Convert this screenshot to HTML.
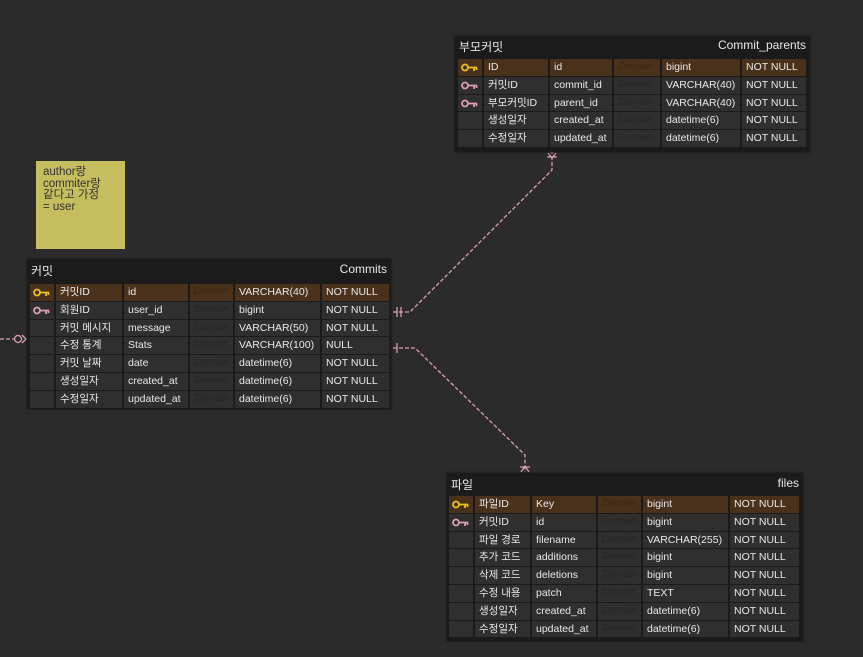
<!DOCTYPE html>
<html><head><meta charset="utf-8"><style>
body{margin:0;width:863px;height:657px;background:#2b2b2b;overflow:hidden;position:relative;font-family:"Liberation Sans","Noto Sans CJK KR",sans-serif;color:#e8e8e8}
.t{position:absolute;background:#1b1b1b;box-shadow:0 0 2px #111}
.h{position:absolute;left:4px;right:4px;top:2px;font-size:12px;display:flex;justify-content:space-between}
.rows{position:absolute;left:2px}
.r{display:grid;column-gap:2px;height:16.8px;margin-bottom:1px;font-size:10.5px;line-height:16px}
.r div{background:#2f2f2f;padding-left:4px;white-space:nowrap;overflow:hidden}
.r.pk div{background:#4a311c}
.r div.d{color:#262626;font-style:italic;font-size:10px}
.r.pk div.d{color:#3a2716}
.k{position:relative}
.k svg{position:absolute;left:3px;top:4px}
.note{position:absolute;left:36px;top:161px;width:89px;height:88px;background:#c5bd5e;color:#333;font-size:11.5px;line-height:11.5px;padding:6px 0 0 7px;box-sizing:border-box}
</style></head><body>
<svg width="863" height="657" style="position:absolute;left:0;top:0">
<g stroke="#d9a0b2" stroke-width="1.3" fill="none" stroke-dasharray="4,2">
<path d="M393 312 L410 312 L552 170 L552 152"/>
<path d="M393 348 L415 348 L525 455 L525 472"/>
<path d="M0 339 L14 339"/>
</g>
<g stroke="#d9a0b2" stroke-width="1.3" fill="none">
<path d="M397 307 V317 M401 307 V317"/>
<path d="M397 343 V353"/>
<path d="M547 157 H557 M548 153 L552 158 L556 153"/>
<path d="M520 467 H530 M521 472 L525 466 L529 472"/>
<circle cx="18" cy="339" r="3.5"/><path d="M22 335 L26 339 L22 343"/>
</g>
</svg>
<div class="note">author랑<br>commiter랑<br>같다고 가정<br>= user</div>

<div class="t" style="left:455px;top:36px;width:355px;height:116px">
<div class="h"><span>부모커밋</span><span>Commit_parents</span></div>
<div class="rows" style="top:23px;left:3px">
<div class="r pk" style="grid-template-columns:24px 64px 62px 46px 78px 64px"><div class="k"><svg width="18" height="9"><circle cx="4" cy="4.5" r="3" stroke="#e8c020" stroke-width="1.8" fill="none"/><path d="M7 4.5H16M13 4.5V8M15.5 4.5V7" stroke="#e8c020" stroke-width="1.8"/></svg></div><div>ID</div><div>id</div><div class="d">Domain</div><div>bigint</div><div>NOT NULL</div></div>
<div class="r" style="grid-template-columns:24px 64px 62px 46px 78px 64px"><div class="k"><svg width="18" height="9"><circle cx="4" cy="4.5" r="3" stroke="#d9a0b2" stroke-width="1.8" fill="none"/><path d="M7 4.5H16M13 4.5V8M15.5 4.5V7" stroke="#d9a0b2" stroke-width="1.8"/></svg></div><div>커밋ID</div><div>commit_id</div><div class="d">Domain</div><div>VARCHAR(40)</div><div>NOT NULL</div></div>
<div class="r" style="grid-template-columns:24px 64px 62px 46px 78px 64px"><div class="k"><svg width="18" height="9"><circle cx="4" cy="4.5" r="3" stroke="#d9a0b2" stroke-width="1.8" fill="none"/><path d="M7 4.5H16M13 4.5V8M15.5 4.5V7" stroke="#d9a0b2" stroke-width="1.8"/></svg></div><div>부모커밋ID</div><div>parent_id</div><div class="d">Domain</div><div>VARCHAR(40)</div><div>NOT NULL</div></div>
<div class="r" style="grid-template-columns:24px 64px 62px 46px 78px 64px"><div></div><div>생성일자</div><div>created_at</div><div class="d">Domain</div><div>datetime(6)</div><div>NOT NULL</div></div>
<div class="r" style="grid-template-columns:24px 64px 62px 46px 78px 64px"><div></div><div>수정일자</div><div>updated_at</div><div class="d">Domain</div><div>datetime(6)</div><div>NOT NULL</div></div>
</div></div>

<div class="t" style="left:27px;top:259px;width:364px;height:150px">
<div class="h" style="top:3px"><span>커밋</span><span>Commits</span></div>
<div class="rows" style="top:25px;left:3px">
<div class="r pk" style="grid-template-columns:24px 66px 64px 43px 85px 67px"><div class="k"><svg width="18" height="9"><circle cx="4" cy="4.5" r="3" stroke="#e8c020" stroke-width="1.8" fill="none"/><path d="M7 4.5H16M13 4.5V8M15.5 4.5V7" stroke="#e8c020" stroke-width="1.8"/></svg></div><div>커밋ID</div><div>id</div><div class="d">Domain</div><div>VARCHAR(40)</div><div>NOT NULL</div></div>
<div class="r" style="grid-template-columns:24px 66px 64px 43px 85px 67px"><div class="k"><svg width="18" height="9"><circle cx="4" cy="4.5" r="3" stroke="#d9a0b2" stroke-width="1.8" fill="none"/><path d="M7 4.5H16M13 4.5V8M15.5 4.5V7" stroke="#d9a0b2" stroke-width="1.8"/></svg></div><div>회원ID</div><div>user_id</div><div class="d">Domain</div><div>bigint</div><div>NOT NULL</div></div>
<div class="r" style="grid-template-columns:24px 66px 64px 43px 85px 67px"><div></div><div>커밋 메시지</div><div>message</div><div class="d">Domain</div><div>VARCHAR(50)</div><div>NOT NULL</div></div>
<div class="r" style="grid-template-columns:24px 66px 64px 43px 85px 67px"><div></div><div>수정 통계</div><div>Stats</div><div class="d">Domain</div><div>VARCHAR(100)</div><div>NULL</div></div>
<div class="r" style="grid-template-columns:24px 66px 64px 43px 85px 67px"><div></div><div>커밋 날짜</div><div>date</div><div class="d">Domain</div><div>datetime(6)</div><div>NOT NULL</div></div>
<div class="r" style="grid-template-columns:24px 66px 64px 43px 85px 67px"><div></div><div>생성일자</div><div>created_at</div><div class="d">Domain</div><div>datetime(6)</div><div>NOT NULL</div></div>
<div class="r" style="grid-template-columns:24px 66px 64px 43px 85px 67px"><div></div><div>수정일자</div><div>updated_at</div><div class="d">Domain</div><div>datetime(6)</div><div>NOT NULL</div></div>
</div></div>

<div class="t" style="left:447px;top:473px;width:356px;height:168px">
<div class="h" style="top:3px"><span>파일</span><span>files</span></div>
<div class="rows" style="top:23px;left:2px">
<div class="r pk" style="grid-template-columns:24px 55px 64px 43px 85px 69px"><div class="k"><svg width="18" height="9"><circle cx="4" cy="4.5" r="3" stroke="#e8c020" stroke-width="1.8" fill="none"/><path d="M7 4.5H16M13 4.5V8M15.5 4.5V7" stroke="#e8c020" stroke-width="1.8"/></svg></div><div>파일ID</div><div>Key</div><div class="d">Domain</div><div>bigint</div><div>NOT NULL</div></div>
<div class="r" style="grid-template-columns:24px 55px 64px 43px 85px 69px"><div class="k"><svg width="18" height="9"><circle cx="4" cy="4.5" r="3" stroke="#d9a0b2" stroke-width="1.8" fill="none"/><path d="M7 4.5H16M13 4.5V8M15.5 4.5V7" stroke="#d9a0b2" stroke-width="1.8"/></svg></div><div>커밋ID</div><div>id</div><div class="d">Domain</div><div>bigint</div><div>NOT NULL</div></div>
<div class="r" style="grid-template-columns:24px 55px 64px 43px 85px 69px"><div></div><div>파일 경로</div><div>filename</div><div class="d">Domain</div><div>VARCHAR(255)</div><div>NOT NULL</div></div>
<div class="r" style="grid-template-columns:24px 55px 64px 43px 85px 69px"><div></div><div>추가 코드</div><div>additions</div><div class="d">Domain</div><div>bigint</div><div>NOT NULL</div></div>
<div class="r" style="grid-template-columns:24px 55px 64px 43px 85px 69px"><div></div><div>삭제 코드</div><div>deletions</div><div class="d">Domain</div><div>bigint</div><div>NOT NULL</div></div>
<div class="r" style="grid-template-columns:24px 55px 64px 43px 85px 69px"><div></div><div>수정 내용</div><div>patch</div><div class="d">Domain</div><div>TEXT</div><div>NOT NULL</div></div>
<div class="r" style="grid-template-columns:24px 55px 64px 43px 85px 69px"><div></div><div>생성일자</div><div>created_at</div><div class="d">Domain</div><div>datetime(6)</div><div>NOT NULL</div></div>
<div class="r" style="grid-template-columns:24px 55px 64px 43px 85px 69px"><div></div><div>수정일자</div><div>updated_at</div><div class="d">Domain</div><div>datetime(6)</div><div>NOT NULL</div></div>
</div></div>
</body></html>
